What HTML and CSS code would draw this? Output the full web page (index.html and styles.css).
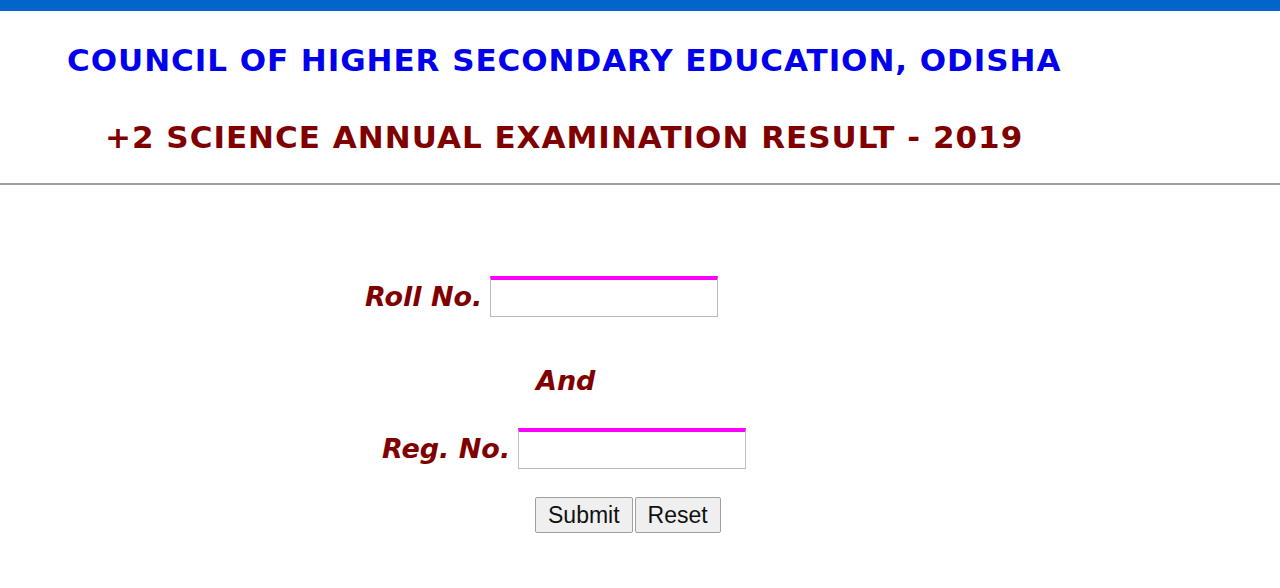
FILE: index.html
```html
<!DOCTYPE html>
<html lang="en">
<head>
  <meta charset="UTF-8">
  <title>CHSE Odisha Result 2019</title>
  <link rel="stylesheet" href="styles.css">
</head>
<body>
  <div class="topbar"></div>
  <header>
    <h1>COUNCIL OF HIGHER SECONDARY EDUCATION, ODISHA</h1>
    <h2>+2 SCIENCE ANNUAL EXAMINATION RESULT - 2019</h2>
  </header>
  <form class="result-form" onsubmit="return false;">
    <div class="row row-roll">
      <label for="roll">Roll No.</label>
      <input type="text" id="roll">
    </div>
    <div class="row row-and">
      <span class="and">And</span>
    </div>
    <div class="row row-reg">
      <label for="reg">Reg. No.</label>
      <input type="text" id="reg">
    </div>
    <div class="row row-buttons">
      <button type="submit">Submit</button>
      <button type="reset">Reset</button>
    </div>
  </form>
</body>
</html>
```

FILE: styles.css
```css
body {
  margin: 0;
  background: #fff;
  font-family: "DejaVu Sans", Verdana, sans-serif;
}
.topbar {
  height: 11px;
  background: #0066cc;
}
header {
  border-bottom: 2px solid #a0a0a0;
  padding: 31px 0 28px;
}
header h1 {
  margin: 0 0 0 67px;
  color: #0000ee;
  font-size: 31px;
  letter-spacing: 0.95px;
  font-weight: bold;
  line-height: 36px;
}
header h2 {
  margin: 41px 0 0 105px;
  color: #800000;
  font-size: 31px;
  letter-spacing: 1px;
  font-weight: bold;
  line-height: 36px;
}
.result-form {
  padding-top: 91px;
}
.row {
  display: flex;
  align-items: center;
}
label, .and {
  color: #800000;
  font-size: 27px;
  font-weight: bold;
  font-style: italic;
  margin-right: 8px;
}
input {
  width: 226px;
  height: 36px;
  box-sizing: content-box;
  padding: 0;
  border: 1px solid #bbb;
  border-top: 4px solid #ff00ff;
  margin: 0;
}
.row-roll {
  padding-left: 365px;
}
.row-and {
  padding-left: 536px;
  margin-top: 48px;
}
.row-reg {
  padding-left: 382px;
  margin-top: 32px;
}
.row-buttons {
  padding-left: 535px;
  margin-top: 28px;
}
button {
  font-family: "Liberation Sans", Arial, sans-serif;
  font-size: 23px;
  height: 36px;
  padding: 0 12px;
  margin-right: 2px;
  background: #efefef;
  border: 1px solid #a0a0a0;
  border-radius: 2px;
  color: #111;
}
```
